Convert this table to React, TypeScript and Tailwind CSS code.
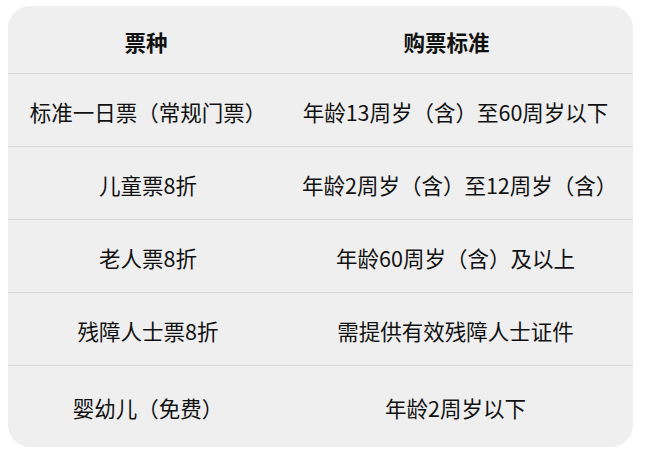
import React from 'react';

const rows = [
  ['标准一日票（常规门票）', '年龄13周岁（含）至60周岁以下'],
  ['儿童票8折', '年龄2周岁（含）至12周岁（含）'],
  ['老人票8折', '年龄60周岁（含）及以上'],
  ['残障人士票8折', '需提供有效残障人士证件'],
  ['婴幼儿（免费）', '年龄2周岁以下'],
];

export default function App() {
  return (
    <div
      className="w-[645px] h-[459px] bg-white pt-[6px] pl-[8px]"
      style={{ fontFamily: '"Noto Sans CJK SC", "Noto Sans", sans-serif' }}
    >
      <div className="w-[625px] h-[441px] bg-[#efefef] rounded-[22px] overflow-hidden text-[#111] text-[21.5px] flex flex-col">
        {/* header */}
        <div className="grid grid-cols-[276px_1fr] h-[68px] items-center pt-[5px] font-bold border-b border-[#d9d9d9]">
          <div className="text-center">票种</div>
          <div className="text-center pr-[24px]">购票标准</div>
        </div>
        {rows.map(([kind, rule], i) => (
          <div
            key={i}
            className={`grid grid-cols-[276px_1fr] items-center pt-[4px] ${
              i === rows.length - 1 ? 'flex-1' : 'h-[73px] border-b border-[#d9d9d9]'
            }`}
          >
            <div className="text-center pl-[4px]">{kind}</div>
            <div className="text-center pl-[18px] pr-[24px]">{rule}</div>
          </div>
        ))}
      </div>
    </div>
  );
}
